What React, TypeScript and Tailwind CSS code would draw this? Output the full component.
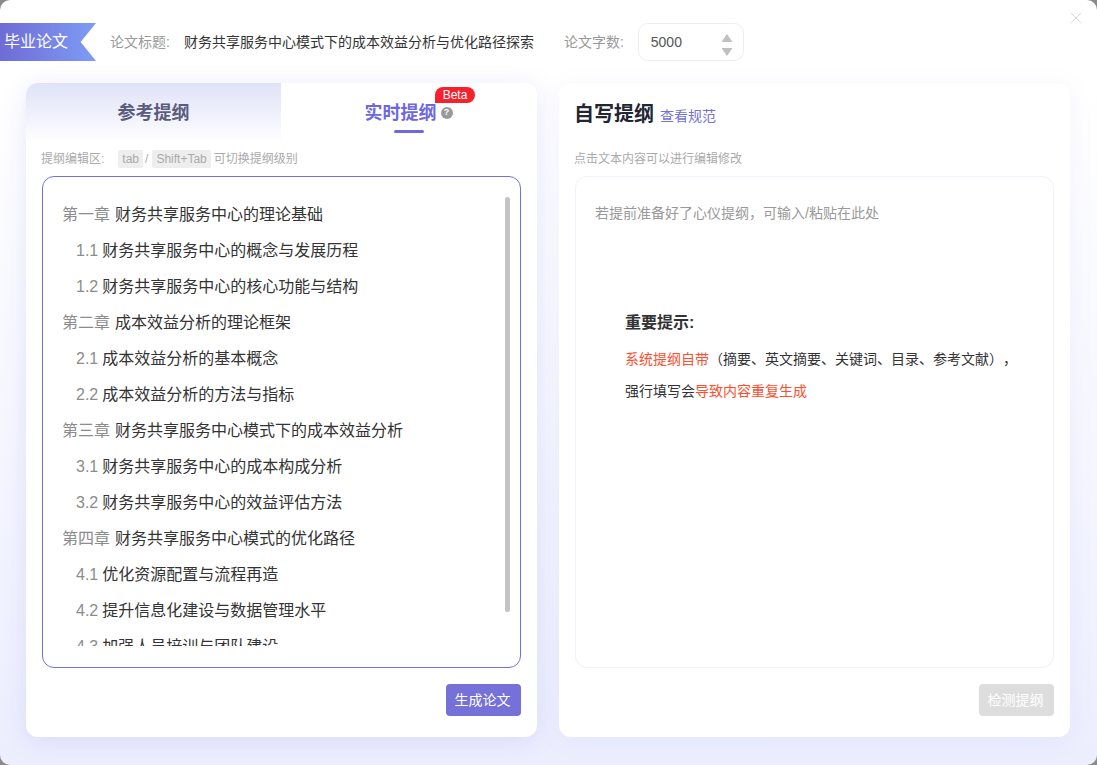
import { X } from 'lucide-react'

const FONT = "font-['Liberation_Sans','Noto_Sans_CJK_SC',sans-serif]"

const OUTLINE = [
  { no: '第一章', title: '财务共享服务中心的理论基础', level: 1 },
  { no: '1.1', title: '财务共享服务中心的概念与发展历程', level: 2 },
  { no: '1.2', title: '财务共享服务中心的核心功能与结构', level: 2 },
  { no: '第二章', title: '成本效益分析的理论框架', level: 1 },
  { no: '2.1', title: '成本效益分析的基本概念', level: 2 },
  { no: '2.2', title: '成本效益分析的方法与指标', level: 2 },
  { no: '第三章', title: '财务共享服务中心模式下的成本效益分析', level: 1 },
  { no: '3.1', title: '财务共享服务中心的成本构成分析', level: 2 },
  { no: '3.2', title: '财务共享服务中心的效益评估方法', level: 2 },
  { no: '第四章', title: '财务共享服务中心模式的优化路径', level: 1 },
  { no: '4.1', title: '优化资源配置与流程再造', level: 2 },
  { no: '4.2', title: '提升信息化建设与数据管理水平', level: 2 },
  { no: '4.3', title: '加强人员培训与团队建设', level: 2 },
]

function Header() {
  return (
    <div className="flex h-[83px] items-start pt-[23px]">
      <div className="flex h-[38px] w-[96px] items-center bg-gradient-to-r from-[#6f6bd6] to-[#7d9cf5] pl-[4px] text-[16px] text-white [clip-path:polygon(0_0,100%_0,84%_50%,100%_100%,0_100%)]">
        毕业论文
      </div>
      <div className="ml-[14px] flex h-[38px] items-center text-[14px]">
        <span className="text-[#999999]">论文标题:</span>
        <span className="ml-[14px] text-[#333333]">财务共享服务中心模式下的成本效益分析与优化路径探索</span>
        <span className="ml-[30px] text-[#999999]">论文字数:</span>
        <div className="ml-[14px] flex h-[38px] w-[106px] items-center justify-between rounded-[10px] border border-[#eeeeee] bg-white pl-[12px] pr-[10px] text-[#555555]">
          5000
          <svg width="12" height="28" viewBox="0 0 12 28" className="fill-[#bfbfbf]">
            <path d="M6 6 11.5 14H.5Z" />
            <path d="M6 28 11.5 20H.5Z" />
          </svg>
        </div>
      </div>
    </div>
  )
}

function LeftCard() {
  return (
    <div className="flex w-[511px] flex-col rounded-[12px] bg-white shadow-[0_4px_24px_rgba(110,115,230,0.16)]">
      <div className="flex h-[57px]">
        <div className="flex w-[255px] items-center justify-center rounded-tl-[12px] bg-gradient-to-b from-[#e0e2f8] to-[#fdfdff] pt-[3px] text-[18px] font-bold text-[#5a5c7e]">
          参考提纲
        </div>
        <div className="relative flex w-[256px] items-center justify-center rounded-t-[12px] bg-white pt-[3px]">
          <span className="text-[18px] font-bold text-[#6c69e0]">实时提纲</span>
          <span className="ml-[4px] mr-[1px] flex h-[12px] w-[12px] items-center justify-center rounded-full bg-[#999999] text-[9px] font-bold text-white">?</span>
          <span className="absolute left-[154px] top-[4px] flex h-[16px] w-[40px] items-center justify-center rounded-[8px_8px_8px_0] bg-[#f5222d] text-[12px] text-white">Beta</span>
          <span className="absolute bottom-[7px] left-[113px] h-[3px] w-[30px] rounded-full bg-[#6c69e0]" />
        </div>
      </div>
      <div className="mt-[10px] flex h-[18px] items-center pl-[15px] text-[12px] text-[#aaaaaa]">
        提纲编辑区:
        <span className="ml-[14px] rounded-[2px] bg-[#eeeeee] px-[4px]">tab</span>
        <span className="ml-[1px] mr-[3px] px-[1px]">/</span>
        <span className="rounded-[2px] bg-[#eeeeee] px-[4px]">Shift+Tab</span>
        <span className="ml-[3px]">可切换提纲级别</span>
      </div>
      <div className="relative mx-[16px] mt-[8px] h-[492px] rounded-[12px] border border-[#7571d8] px-[20px] pt-[20px]">
        <div className="h-[449px] overflow-hidden">
          {OUTLINE.map((o) => (
            <div key={o.no} className={`flex h-[36px] items-center text-[16px] ${o.level === 2 ? 'pl-[13px]' : '-ml-[1px]'}`}>
              <span className="text-[#8c8c8c]">{o.no}</span>
              <span className={`${o.level === 2 ? 'ml-[4px]' : 'ml-[5px]'} text-[#333333]`}>{o.title}</span>
            </div>
          ))}
        </div>
        <div className="absolute left-[462px] top-[20px] h-[415px] w-[5px] rounded-full bg-[#c4c4c4]" />
      </div>
      <div className="mt-[16px] flex justify-end pr-[16px]">
        <button className="h-[32px] w-[75px] rounded-[4px] bg-[#7571d8] pr-[2px] text-[14px] text-white">生成论文</button>
      </div>
    </div>
  )
}

function RightCard() {
  return (
    <div className="flex w-[511px] flex-col rounded-[12px] bg-white px-[16px] shadow-[0_4px_24px_rgba(110,115,230,0.08)]">
      <div className="-ml-[1px] flex h-[57px] items-end pb-[11px]">
        <span className="text-[20px] font-bold text-[#222533]">自写提纲</span>
        <span className="mb-[2px] ml-[6px] text-[14px] text-[#7571d8]">查看规范</span>
      </div>
      <div className="-ml-[1px] mt-[10px] h-[18px] text-[12px] leading-[18px] text-[#aaaaaa]">点击文本内容可以进行编辑修改</div>
      <div className="mt-[8px] h-[492px] rounded-[12px] border border-[#f0f1fb] px-[19px] pt-[26px]">
        <div className="text-[14px] leading-[20px] text-[#999999]">若提前准备好了心仪提纲，可输入/粘贴在此处</div>
        <div className="mt-[88px] pl-[30px]">
          <div className="text-[16px] font-bold leading-[24px] text-[#333333]">重要提示:</div>
          <div className="mt-[8px] text-[14px] leading-[32px] text-[#333333] [text-spacing-trim:space-all]">
            <span className="text-[#ff4d2e]">系统提纲自带</span>（摘要、英文摘要、关键词、目录、参考文献），
            <br />
            强行填写会<span className="text-[#ff4d2e]">导致内容重复生成</span>
          </div>
        </div>
      </div>
      <div className="mt-[16px] flex justify-end">
        <button className="h-[32px] w-[75px] rounded-[4px] bg-[#dddddd] pr-[2px] text-[14px] text-white">检测提纲</button>
      </div>
    </div>
  )
}

export default function App() {
  return (
    <div className={`relative h-[765px] w-[1097px] overflow-hidden bg-[#8a8a8a] ${FONT}`}>
      <div className="h-full rounded-[10px] bg-gradient-to-b from-white via-white via-[12%] to-[#eceefe] px-[26px]">
        <div className="-ml-[26px]">
          <Header />
        </div>
        <div className="flex h-[654px] justify-between pr-[1px]">
          <LeftCard />
          <RightCard />
        </div>
      </div>
      <X size={20} strokeWidth={1} className="absolute right-[11px] top-[8px] text-[#d4d4d4]" />
    </div>
  )
}
